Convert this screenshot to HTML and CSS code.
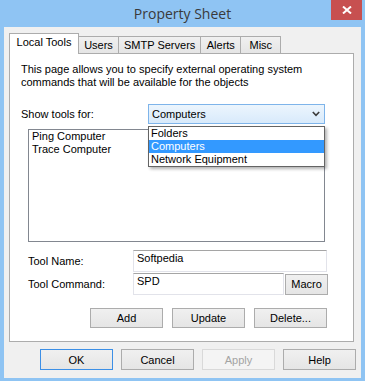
FILE: index.html
```html
<!DOCTYPE html>
<html lang="en">
  <head>
    <meta charset="UTF-8" />
    <meta name="viewport" content="width=device-width, initial-scale=1.0" />
    <title>Property Sheet</title>
    <link rel="stylesheet" href="styles.css">
  </head>
  <body>
    <div class="window">
      <div class="titlebar">
        <span></span>
        <div class="title">Property Sheet</div>
        <div class="close">
          <svg width="10" height="8" viewBox="0 0 10 8">
            <path d="M1 0.5 L9 7.5 M9 0.5 L1 7.5" stroke="#fff" stroke-width="2" />
          </svg>
        </div>
      </div>

      <div class="client">
        <div class="tabs">
          <div class="tab selected">Local Tools</div>
          <div class="tab">Users</div>
          <div class="tab">SMTP Servers</div>
          <div class="tab">Alerts</div>
          <div class="tab">Misc</div>
        </div>

        <div class="panel">
          <p class="desc">
            This page allows you to specify external operating system<br />
            commands that will be available for the objects
          </p>

          <div class="show-row">
            <span class="show-label">Show tools for:</span>
            <div class="combo">
              <div class="combo-box">
                <span>Computers</span>
                <svg width="8" height="6" viewBox="0 0 8 6">
                  <path d="M0.8 1 L4 4.4 L7.2 1" fill="none" stroke="#3c3c3c" stroke-width="1.6" />
                </svg>
              </div>
              <ul class="combo-list">
                <li>Folders</li>
                <li class="active">Computers</li>
                <li>Network Equipment</li>
              </ul>
            </div>
          </div>

          <ul class="listbox">
            <li>Ping Computer</li>
            <li>Trace Computer</li>
          </ul>

          <div class="field-row">
            <span class="field-label">Tool Name:</span>
            <div class="field wide">Softpedia</div>
          </div>
          <div class="field-row">
            <span class="field-label">Tool Command:</span>
            <div class="field">SPD</div>
            <button class="btn macro">Macro</button>
          </div>

          <div class="tool-buttons">
            <button class="btn">Add</button>
            <button class="btn">Update</button>
            <button class="btn">Delete...</button>
          </div>
        </div>

        <div class="dialog-buttons">
          <button class="btn default">OK</button>
          <button class="btn">Cancel</button>
          <button class="btn" disabled>Apply</button>
          <button class="btn">Help</button>
        </div>
      </div>
    </div>
  </body>
</html>
```

FILE: styles.css
```css
* {
  margin: 0;
  padding: 0;
  box-sizing: border-box;
}

body {
  font-family: "Liberation Sans", Arial, sans-serif;
  font-size: 11px;
  line-height: 13px;
  color: #000;
  background: #8fc4f3;
}

.window {
  width: 365px;
  height: 381px;
  background: #8fc4f3;
  display: flex;
  flex-direction: column;
}

.titlebar {
  height: 27px;
  display: grid;
  grid-template-columns: 1fr auto 1fr;
  align-items: start;
}

.title {
  font-family: "Open Sans", sans-serif;
  font-size: 14px;
  line-height: 20px;
  padding-top: 4px;
  color: #3a3a3a;
}

.close {
  justify-self: end;
  margin-right: 3px;
  width: 31px;
  height: 20px;
  background: #c75050;
  display: flex;
  align-items: center;
  justify-content: center;
}

.client {
  flex: 1;
  margin: 0 4px 3px 4px;
  background: #f0f0f0;
  padding: 6px 7px 0 5px;
}

/* tab strip */

.tabs {
  display: flex;
  align-items: flex-end;
  height: 21px;
  position: relative;
  z-index: 1;
}

.tab {
  height: 17px;
  margin-bottom: 1px;
  margin-left: -1px;
  min-width: 41px;
  padding: 0 5px;
  text-align: center;
  line-height: 16px;
  border: 1px solid #acacac;
  border-bottom: none;
  background: linear-gradient(#f0f0f0, #e5e5e5);
}

.tab.selected {
  height: 21px;
  margin: 0;
  width: 70px;
  line-height: 17px;
  background: #fff;
}

.panel {
  margin-top: -1px;
  height: 289px;
  border: 1px solid #acacac;
  background: #fff;
}

.desc {
  margin: 9px 0 0 11px;
}

.show-row {
  display: flex;
  align-items: center;
  margin: 15px 0 0 11px;
}

.show-label {
  width: 127px;
}

.combo {
  position: relative;
  width: 177px;
}

.combo-box {
  height: 20px;
  border: 1px solid #7eb4ea;
  background: linear-gradient(#ecf5fd, #d8eafb);
  display: flex;
  align-items: center;
  justify-content: space-between;
  padding: 0 4px 0 3px;
}

.combo-list {
  position: absolute;
  top: 22px;
  left: 0;
  width: 177px;
  list-style: none;
  background: #fff;
  border: 1px solid #646464;
  box-shadow: 2px 2px 3px rgba(0, 0, 0, 0.3);
  z-index: 2;
}

.combo-list li {
  height: 13px;
  padding-left: 2px;
}

.combo-list li.active {
  background: #3399ff;
  color: #fff;
}

.listbox {
  list-style: none;
  margin: 5px 0 0 18px;
  width: 297px;
  height: 113px;
  border: 1px solid #828790;
  padding-left: 3px;
}

.field-row {
  display: flex;
  align-items: center;
  margin: 1px 0 0 18px;
}

.listbox + .field-row {
  margin-top: 8px;
}

.field-label {
  width: 105px;
}

.field {
  height: 22px;
  width: 151px;
  border: 1px solid #e2e3ea;
  border-top-color: #a5a5a5;
  padding: 1px 3px 0;
}

.field.wide {
  width: 194px;
}

.btn {
  font-family: inherit;
  font-size: 11px;
  color: #000;
  width: 73px;
  height: 21px;
  border: 1px solid #acacac;
  background: linear-gradient(#f0f0f0, #e5e5e5);
}

.btn.macro {
  width: 43px;
  margin-left: 1px;
}

.btn.default {
  border-color: #3c8fe6;
}

.btn:disabled {
  color: #a3a3a3;
  border-color: #d9d9d9;
  background: #f4f4f4;
}

.tool-buttons {
  display: flex;
  justify-content: flex-end;
  gap: 9px;
  width: 317px;
  margin-top: 13px;
}

.tool-buttons .btn {
  height: 20px;
}

.dialog-buttons {
  display: flex;
  justify-content: flex-end;
  gap: 8px;
  margin: 7px -2px 0 0;
}
```
